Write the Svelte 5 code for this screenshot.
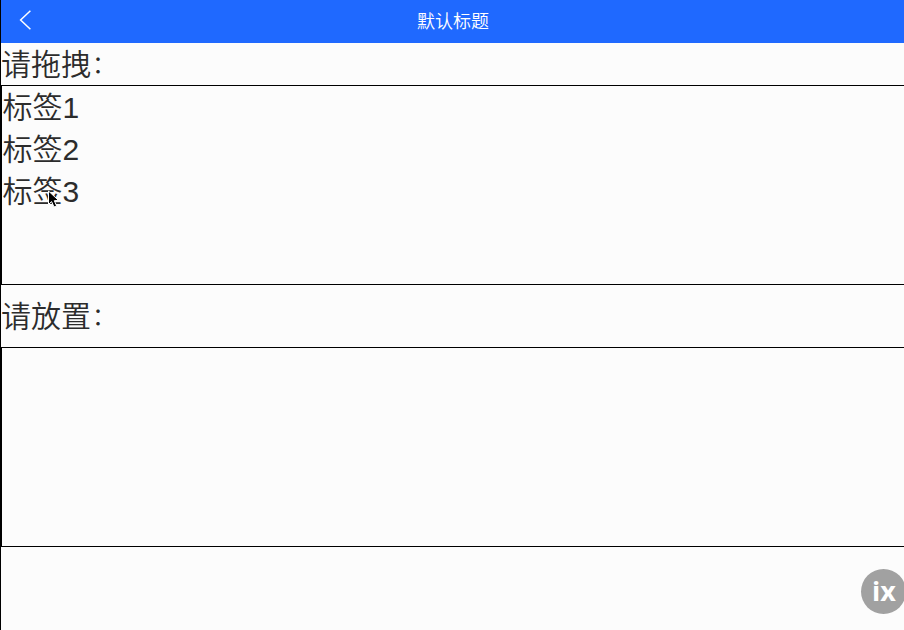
<script>
  const tags = ['标签1', '标签2', '标签3'];
</script>

<div class="page">
  <header>
    <svg class="back" width="14" height="22" viewBox="0 0 14 22" aria-hidden="true">
      <path d="M12.4 1.8 L2.6 11 L12.4 20.2" fill="none" stroke="#fff" stroke-width="1.5" />
    </svg>
    <h1>默认标题</h1>
  </header>

  <p class="label">请拖拽<span class="colon">：</span></p>
  <div class="box">
    {#each tags as tag}
      <div class="tag">{tag}</div>
    {/each}
  </div>
  <p class="label spaced">请放置<span class="colon">：</span></p>
  <div class="box"></div>

  <div class="badge">ix</div>
  <svg class="cursor" width="14" height="20" viewBox="0 0 14 20" aria-hidden="true">
    <path d="M1.5 1 L1.5 14.4 L4.6 11.6 L7 17 L9.6 15.9 L7.3 10.7 L11.5 10.4 Z" fill="#000" stroke="#fff" stroke-width="1" />
  </svg>
</div>

<style>
  :global(body) {
    margin: 0;
  }
  .page {
    position: relative;
    box-sizing: border-box;
    height: 630px;
    overflow: hidden;
    border-left: 1px solid #000;
    background: #fcfcfc;
    color: #2c2c2c;
    font-family: 'Liberation Sans', 'Noto Sans CJK SC', sans-serif;
    font-size: 30px;
    font-weight: 350;
    line-height: 44px;
  }
  header {
    display: grid;
    grid-template-columns: 40px 1fr 40px;
    align-items: center;
    height: 43px;
    background: #1f69ff;
    color: #fff;
  }
  .back {
    margin: -3px 0 0 17px;
  }
  h1 {
    margin: 0 0 0 1px;
    text-align: center;
    font-size: 18px;
    font-weight: 350;
    line-height: 40px;
  }
  .label {
    height: 42px;
    margin: 0;
    white-space: nowrap;
  }
  .colon {
    display: inline-block;
    font-size: 24px;
    line-height: 1;
    transform: translate(1px, -2px);
  }
  .spaced {
    margin: 10px 0;
  }
  .box {
    box-sizing: border-box;
    height: 200px;
    border: 1px solid #000;
    border-right: 0;
  }
  .tag {
    height: 42px;
    padding-left: 0.5px;
  }
  .badge {
    position: absolute;
    left: 860px;
    top: 569px;
    width: 45px;
    height: 45px;
    border-radius: 50%;
    background: #a1a1a1;
    color: #fff;
    font: 700 27px/43px 'Open Sans', sans-serif;
    text-align: center;
    text-indent: 1px;
  }
  .cursor {
    position: absolute;
    left: 46px;
    top: 190px;
  }
</style>
